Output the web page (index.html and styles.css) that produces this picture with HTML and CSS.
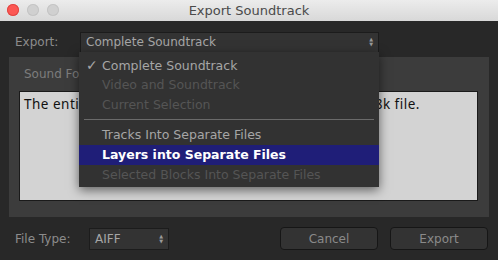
FILE: index.html
```html
<!DOCTYPE html>
<html lang="en">
<head>
    <meta charset="UTF-8">
    <title>Export Soundtrack</title>
    <link rel="stylesheet" href="styles.css">
</head>
<body>
    <div class="window">
        <div class="titlebar">
            <div class="lights">
                <span class="light red"></span>
                <span class="light"></span>
                <span class="light"></span>
            </div>
            <div class="title">Export Soundtrack</div>
        </div>

        <div class="content">
            <div class="export-row">
                <span class="label">Export:</span>
                <div class="select wide">
                    <span>Complete Soundtrack</span>
                    <span class="arrows">&#9650;<br>&#9660;</span>

                    <!-- open popup menu -->
                    <div class="menu">
                        <div class="item checked"><span class="check">&#10003;</span>Complete Soundtrack</div>
                        <div class="item disabled">Video and Soundtrack</div>
                        <div class="item disabled">Current Selection</div>
                        <div class="separator"></div>
                        <div class="item">Tracks Into Separate Files</div>
                        <div class="item active">Layers into Separate Files</div>
                        <div class="item disabled">Selected Blocks Into Separate Files</div>
                    </div>
                </div>
            </div>

            <div class="panel">
                <div class="panel-label">Sound Format</div>
                <div class="description">The entire soundtrack will be exported as a single 48k file.</div>
            </div>

            <div class="bottom-row">
                <span class="label">File Type:</span>
                <div class="select small">
                    <span>AIFF</span>
                    <span class="arrows">&#9650;<br>&#9660;</span>
                </div>
                <div class="buttons">
                    <button class="btn">Cancel</button>
                    <button class="btn">Export</button>
                </div>
            </div>
        </div>
    </div>
</body>
</html>
```

FILE: styles.css
```css
html, body {
    margin: 0;
    padding: 0;
}
body {
    width: 498px;
    height: 260px;
    overflow: hidden;
    background-color: #282828;
    font-family: "DejaVu Sans", sans-serif;
    font-size: 12px;
}
.window {
    position: relative;
    height: 260px;
}
.titlebar {
    position: relative;
    height: 21px;
    background: linear-gradient(#ececec, #d8d8d8);
    display: flex;
    align-items: center;
    justify-content: center;
}
.lights {
    position: absolute;
    left: 7px;
    top: 4px;
    display: flex;
    gap: 8px;
}
.light {
    width: 12px;
    height: 12px;
    border-radius: 50%;
    background-color: #d0d0d0;
    box-shadow: inset 0 0 0 1px #c4c4c4;
}
.light.red {
    background-color: #fc5753;
    box-shadow: inset 0 0 0 1px #df4744;
}
.title {
    color: #4a4a4a;
    font-size: 13px;
}
.content {
    padding: 11px 9px 0 9px;
}
.label {
    color: #8c8c8c;
    padding-left: 6px;
    white-space: nowrap;
    flex-shrink: 0;
}
.export-row {
    display: flex;
    align-items: center;
    height: 20px;
}
.export-row .label {
    width: 65px;
}
.select {
    position: relative;
    box-sizing: border-box;
    display: flex;
    align-items: center;
    justify-content: space-between;
    background-color: #333333;
    border: 1px solid #1c1c1c;
    color: #a6a6a6;
    padding: 0 5px 0 5px;
    flex-shrink: 0;
}
.select.wide {
    width: 299px;
    height: 21px;
}
.select.small {
    width: 80px;
    height: 22px;
}
.arrows {
    font-size: 5px;
    line-height: 5px;
    color: #9a9a9a;
    text-align: center;
}
.menu {
    position: absolute;
    left: -2px;
    top: 19px;
    width: 300px;
    height: 135px;
    box-sizing: border-box;
    padding-top: 3px;
    background-color: #323232;
    box-shadow: 0 3px 10px rgba(0, 0, 0, 0.55);
    z-index: 5;
}
.item {
    height: 20px;
    line-height: 20px;
    padding-left: 23px;
    color: #a6a6a6;
    font-size: 12.5px;
    white-space: nowrap;
}
.item.checked {
    padding-left: 7px;
}
.item.disabled {
    color: #555555;
}
.item.active {
    background-color: #1f1e78;
    color: #ffffff;
    font-weight: bold;
}
.check {
    display: inline-block;
    width: 16px;
    font-size: 14px;
}
.separator {
    height: 1px;
    margin: 4px 5px 5px 5px;
    background-color: #6a6a6a;
}
.panel {
    margin-top: 5px;
    height: 160px;
    box-sizing: border-box;
    background-color: #3c3c3c;
    padding: 10px 11px 0 10px;
}
.panel-label {
    color: #7c7c7c;
    padding-left: 5px;
    height: 24px;
}
.description {
    box-sizing: border-box;
    height: 110px;
    background-color: #d3d3d3;
    border: 1px solid #1a1a1a;
    padding: 3px 4px;
    color: #111111;
    font-family: "Noto Sans", sans-serif;
    font-size: 13.5px;
    letter-spacing: 0.5px;
    white-space: nowrap;
    overflow: hidden;
}
.bottom-row {
    display: flex;
    align-items: center;
    margin-top: 10px;
}
.bottom-row .label {
    width: 74px;
}
.buttons {
    margin-left: auto;
    margin-right: 1px;
    display: flex;
    gap: 12px;
}
.btn {
    width: 98px;
    height: 23px;
    background-color: #333333;
    border: 1px solid #161616;
    border-radius: 4px;
    color: #8a8a8a;
    font-family: "DejaVu Sans", sans-serif;
    font-size: 12px;
    padding: 0;
}
```
